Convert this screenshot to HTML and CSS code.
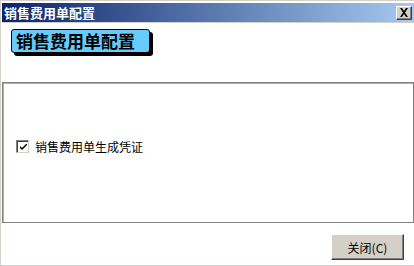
FILE: index.html
```html
<!DOCTYPE html>
<html>
<head>
<meta charset="utf-8">
<link rel="stylesheet" href="styles.css">
</head>
<body>
<div class="window">
  <div class="titlebar">
    <span class="title">销售费用单配置</span>
    <span class="close-btn">
      <svg width="10" height="9" viewBox="0 0 10 9"><path d="M1 0h2l2 3 2-3h2L6 4.5 9 9H7L5 6 3 9H1l3-4.5z" fill="#000"/></svg>
    </span>
  </div>
  <div class="header">
    <div class="badge">销售费用单配置</div>
  </div>
  <div class="panel">
    <label class="check-row">
      <span class="checkbox">
        <svg width="7" height="7" viewBox="0 0 7 7"><path d="M0 2l2 2 5-5v2L2 6 0 4z" fill="#000"/></svg>
      </span>
      <span class="check-label">销售费用单生成凭证</span>
    </label>
  </div>
  <div class="footer">
    <button class="btn">关闭(C)</button>
  </div>
</div>
</body>
</html>
```
FILE: styles.css
```css
html, body {
  margin: 0;
  padding: 0;
  background: #ffffff;
}
body {
  width: 414px;
  height: 266px;
  overflow: hidden;
  font-family: "Noto Sans CJK SC", "Liberation Sans", sans-serif;
}
.window {
  box-sizing: border-box;
  height: 266px;
  border-top: 1px solid #d4d0c8;
  border-left: 1px solid #d4d0c8;
  border-bottom: 1px solid #d4d0c8;
  padding-top: 2px;
  background: #ffffff;
}
.titlebar {
  height: 19px;
  margin-left: 1px;
  background: linear-gradient(to right, #0a246a, #a6caf0);
  border-bottom: 1px solid #d4d0c8;
  display: flex;
  align-items: center;
  justify-content: space-between;
}
.title {
  color: #ffffff;
  font-weight: bold;
  font-size: 13px;
  line-height: 19px;
  padding-left: 2px;
}
.close-btn {
  box-sizing: border-box;
  width: 16px;
  height: 14px;
  margin-right: 2px;
  background: #d4d0c8;
  border-top: 1px solid #ffffff;
  border-left: 1px solid #ffffff;
  border-right: 1px solid #404040;
  border-bottom: 1px solid #404040;
  box-shadow: inset -1px -1px 0 #808080;
  display: flex;
  align-items: center;
  justify-content: center;
}
.header {
  height: 59px;
  box-sizing: border-box;
  padding-top: 6px;
  padding-left: 10px;
}
.badge {
  box-sizing: border-box;
  width: 139px;
  height: 24px;
  background: #66ccff;
  border: 1px solid #000000;
  border-radius: 3px;
  box-shadow: 3px 3px 0 #000000;
  font-weight: bold;
  font-size: 17px;
  line-height: 22px;
  padding-left: 4px;
  color: #000000;
}
.panel {
  box-sizing: border-box;
  height: 141px;
  margin-left: 1px;
  border: 1px solid #808080;
  box-shadow: inset 1px 1px 0 #b0b0b0;
  display: flex;
  align-items: center;
  padding-left: 13px;
  padding-bottom: 12px;
}
.check-row {
  display: flex;
  align-items: center;
  gap: 6px;
}
.checkbox {
  box-sizing: border-box;
  width: 13px;
  height: 13px;
  background: #ffffff;
  border-top: 1px solid #808080;
  border-left: 1px solid #808080;
  border-right: 1px solid #d4d0c8;
  border-bottom: 1px solid #d4d0c8;
  box-shadow: inset 1px 1px 0 #404040;
  display: flex;
  align-items: center;
  justify-content: center;
  padding: 1px 0 0 1px;
}
.check-label {
  font-size: 12px;
  color: #000000;
  line-height: 14px;
}
.footer {
  box-sizing: border-box;
  height: 42px;
  padding-top: 11px;
  padding-right: 10px;
  display: flex;
  justify-content: flex-end;
  align-items: flex-start;
}
.btn {
  box-sizing: border-box;
  width: 73px;
  height: 26px;
  margin: 0;
  padding: 0;
  background: #d4d0c8;
  border-top: 1px solid #ffffff;
  border-left: 1px solid #ffffff;
  border-right: 1px solid #404040;
  border-bottom: 1px solid #404040;
  box-shadow: inset -1px -1px 0 #808080;
  font-family: "Noto Sans CJK SC", "Liberation Sans", sans-serif;
  font-size: 12px;
  color: #000000;
}
```
